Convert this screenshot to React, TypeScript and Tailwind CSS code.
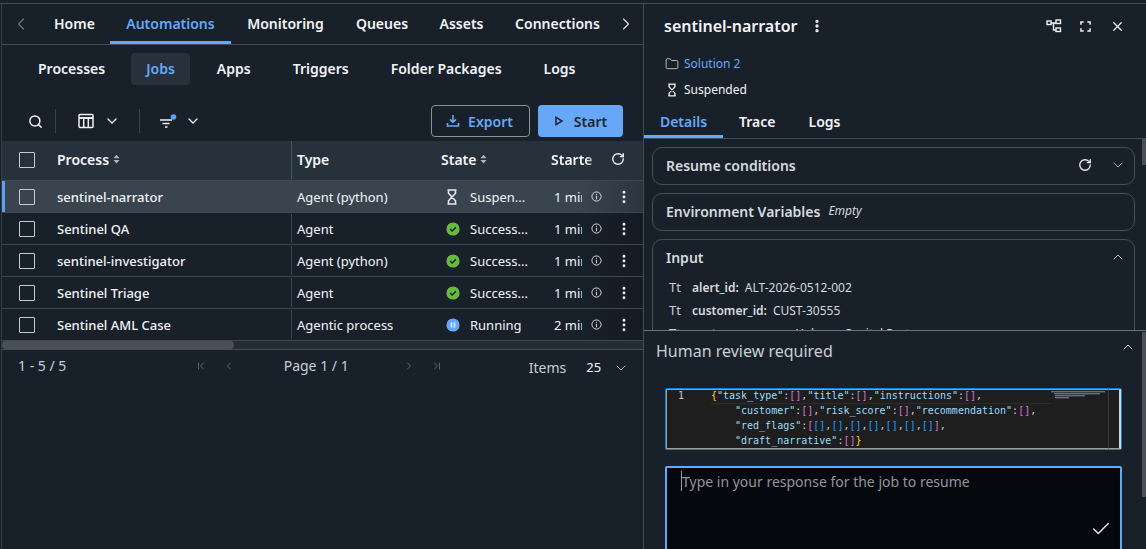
import { ChevronDown, ChevronFirst, ChevronLast, ChevronLeft, ChevronRight, ChevronUp, Check, EllipsisVertical, Folder, Search, X, RotateCw } from 'lucide-react'
import type { ReactNode } from 'react'

const NOTO = "font-['Noto_Sans','Open_Sans',sans-serif]"

const mainTabs = [
  { name: 'Automations', width: 'w-[121px]' },
  { name: 'Monitoring', width: 'w-[109px]' },
  { name: 'Queues', width: 'w-[84px]' },
  { name: 'Assets', width: 'w-[75px]' },
  { name: 'Connections', width: 'w-[117px]' },
]
const subTabs = ['Processes', 'Jobs', 'Apps', 'Triggers', 'Folder Packages', 'Logs']

type JobState = 'suspended' | 'success' | 'running'

const jobs: { name: string; type: string; state: JobState; label: string; started: string }[] = [
  { name: 'sentinel-narrator', type: 'Agent (python)', state: 'suspended', label: 'Suspen...', started: '1 minute ago' },
  { name: 'Sentinel QA', type: 'Agent', state: 'success', label: 'Success...', started: '1 minute ago' },
  { name: 'sentinel-investigator', type: 'Agent (python)', state: 'success', label: 'Success...', started: '1 minute ago' },
  { name: 'Sentinel Triage', type: 'Agent', state: 'success', label: 'Success...', started: '1 minute ago' },
  { name: 'Sentinel AML Case', type: 'Agentic process', state: 'running', label: 'Running', started: '2 minutes ago' },
]

function Hourglass({ className }: { className?: string }) {
  return (
    <svg viewBox="0 0 12 16" className={className} fill="none" stroke="currentColor" strokeWidth="1.6">
      <path d="M1.5 1h9M1.5 15h9M2.5 1v3.2L9.5 11.8V15M9.5 1v3.2L2.5 11.8V15" />
    </svg>
  )
}

function StateIcon({ state }: { state: JobState }) {
  if (state === 'suspended') return <Hourglass className="h-[16px] w-[12px] text-[#e4e8ec]" />
  if (state === 'success') {
    return (
      <svg viewBox="0 0 14 14" className="h-[14px] w-[14px]">
        <circle cx="7" cy="7" r="6.6" fill="#66bb3c" />
        <path d="M4.2 7.2 6.2 9 9.8 5.4" fill="none" stroke="#18202a" strokeWidth="1.6" />
      </svg>
    )
  }
  return (
    <svg viewBox="0 0 14 14" className="h-[14px] w-[14px]">
      <circle cx="7" cy="7" r="6.6" fill="#66a8f7" />
      <path d="M5.5 4.6v4.8M8.5 4.6v4.8" stroke="#e8f1fc" strokeWidth="1.5" />
    </svg>
  )
}

function Info() {
  return (
    <svg viewBox="0 0 12 12" className="h-[11px] w-[11px] text-[#dfe3e7]" fill="none" stroke="currentColor" strokeWidth="1">
      <circle cx="6" cy="6" r="5" />
      <path d="M6 3v1.2M6 5.2V9" />
    </svg>
  )
}

function Box() {
  return <span className="block h-4 w-4 rounded-[1px] border border-[#c5cbd1]" />
}

function SortArrows() {
  return (
    <svg viewBox="0 0 8 10" className="ml-[4px] h-[10px] w-[7px] text-[#aeb5bc]" fill="currentColor">
      <path d="M4 0 7.5 4H.5zM4 10 .5 6h7z" />
    </svg>
  )
}

function TableIcon() {
  return (
    <svg viewBox="0 0 16 16" className="h-4 w-4 text-[#eef1f3]" fill="none" stroke="currentColor" strokeWidth="1.5">
      <rect x="1" y="1.5" width="14" height="13" rx="1" />
      <path d="M1 5h14" strokeWidth="2" />
      <path d="M5.7 5v9M10.3 5v9" />
    </svg>
  )
}

function FilterIcon() {
  return (
    <svg viewBox="0 0 18 15" className="h-[15px] w-[18px] text-[#eef1f3]" fill="none">
      <path d="M1 6h12M3.5 9.5h7M6 13h2.5" stroke="currentColor" strokeWidth="1.5" />
      <circle cx="14.5" cy="3" r="2.8" fill="#5ba2f5" />
    </svg>
  )
}

function Divider() {
  return <span className="block h-6 w-px bg-[#39434e]" />
}

function Cell({ children, className = '' }: { children: ReactNode; className?: string }) {
  return <div className={`flex min-w-0 items-center overflow-hidden whitespace-nowrap ${className}`}>{children}</div>
}

const ROW_GRID = 'grid grid-cols-[55px_234px_150px_110px_31px_61px]'

function JobRow({ job, selected }: { job: (typeof jobs)[number]; selected: boolean }) {
  return (
    <div
      className={`${ROW_GRID} h-8 border-b border-[#3e4853] text-[13px] text-[#f2f4f6] ${selected ? 'bg-[#39444f]' : 'bg-[#18202a]'}`}
    >
      <Cell className={`pl-[17px] ${selected ? 'shadow-[inset_3px_0_0_#5ba2f5]' : ''}`}>
        <Box />
      </Cell>
      <Cell className="pt-[2px] font-medium">{job.name}</Cell>
      <Cell className="my-px border-l border-[#3e4853] pt-[2px] pl-[5px]">{job.type}</Cell>
      <Cell className="pl-[5px]">
        <span className="flex w-[24px] items-center">
          <StateIcon state={job.state} />
        </span>
        <span className="pt-[2px]">{job.label}</span>
      </Cell>
      <Cell className="pt-[2px] pl-[3px]">{job.started}</Cell>
      <Cell
        className={`justify-end gap-[14px] pr-[11px] ${selected ? 'bg-linear-to-r from-[#39444f] to-[#2b3540]' : 'bg-linear-to-r from-[#18202a] to-[#141b24]'}`}
      >
        <Info />
        <EllipsisVertical className="h-4 w-4 text-[#eef1f3]" strokeWidth={2.4} />
      </Cell>
    </div>
  )
}

function Card({ children, className = '' }: { children: ReactNode; className?: string }) {
  return <div className={`rounded-[10px] border border-[#465059] px-[13px] ${className}`}>{children}</div>
}

function Tt() {
  return <span className="w-[26px] pl-[3px] text-[13px] text-[#c9ced3]">Tt</span>
}

function InputRow({ name, value }: { name: string; value: string }) {
  return (
    <div className="flex h-[23px] items-center whitespace-nowrap text-[12px]">
      <Tt />
      <span className="mr-[6px] font-semibold">{name}</span>
      {value}
    </div>
  )
}

const STR = 'text-[#9cdcfe]'
const PUNC = 'text-[#cccccc]'
const GOLD = 'text-[#ffd700]'
const PINK = 'text-[#da70d6]'
const BLUE = 'text-[#179fff]'

function Pair({ k, last }: { k: string; last?: boolean }) {
  return (
    <>
      <span className={STR}>"{k}"</span>
      <span className={PUNC}>:</span>
      <span className={PINK}>[]</span>
      {!last && <span className={PUNC}>,</span>}
    </>
  )
}

function Minimap() {
  const lines = [
    { y: 0, x: 0, w: 54 },
    { y: 2, x: 3, w: 46 },
    { y: 4, x: 4, w: 30 },
    { y: 6, x: 4, w: 14 },
  ]
  return (
    <svg viewBox="0 0 54 8" className="h-2 w-[54px]">
      {lines.map((l) => (
        <rect key={l.y} x={l.x} y={l.y} width={l.w} height="1.4" fill="#5b7280" />
      ))}
    </svg>
  )
}

export default function App() {
  return (
    <div className={`${NOTO} flex h-[549px] w-[1146px] flex-col overflow-hidden bg-[#18202a] pt-[3px] text-[#f2f4f6]`}>
      <div className="flex min-h-0 flex-1 border-t border-[#434d57]">
        {/* jobs list */}
        <div className="ml-px flex w-[642px] shrink-0 flex-col border-l border-[#333d47]">
          <div className="flex h-[41px] shrink-0 items-stretch border-b border-[#434d57] pb-px text-[14px] font-semibold">
            <div className="flex w-[108px] items-center pl-[9px]">
              <ChevronLeft className="h-5 w-5 text-[#6d7781]" strokeWidth={1.4} />
              <span className="ml-[23px]">Home</span>
            </div>
            {mainTabs.map((tab) => (
              <div
                key={tab.name}
                className={`relative flex items-center justify-center ${tab.width} ${tab.name === 'Automations' ? 'text-[#66a8f7]' : ''}`}
              >
                {tab.name}
                {tab.name === 'Automations' && <span className="absolute inset-x-0 -bottom-px h-[3px] bg-[#66a8f7]" />}
              </div>
            ))}
            <div className="flex items-center">
              <ChevronRight className="h-5 w-5 text-[#dfe3e7]" strokeWidth={1.4} />
            </div>
          </div>

          <div className="flex h-[48px] shrink-0 items-center gap-3 pl-[21px] text-[14px] font-semibold">
            {subTabs.map((tab) => (
              <div
                key={tab}
                className={`flex h-8 items-center rounded pb-px pl-[15px] ${tab === 'Processes' ? 'pr-[14px]' : 'pr-[15px]'} ${tab === 'Jobs' ? 'bg-[#27313b] text-[#66a8f7]' : ''}`}
              >
                {tab}
              </div>
            ))}
          </div>

          <div className="flex h-[48px] shrink-0 items-center pt-[8px] pr-[20px] pl-[26px]">
            <Search className="h-[15px] w-[15px] text-[#eef1f3]" strokeWidth={2.4} />
            <span className="ml-[12px]">
              <Divider />
            </span>
            <span className="ml-[22px]">
              <TableIcon />
            </span>
            <ChevronDown className="ml-[10px] h-4 w-4 text-[#eef1f3]" strokeWidth={2} />
            <span className="ml-[19px]">
              <Divider />
            </span>
            <span className="ml-[19px]">
              <FilterIcon />
            </span>
            <ChevronDown className="ml-[8px] h-4 w-4 text-[#eef1f3]" strokeWidth={2} />
            <div className="ml-auto flex gap-2 text-[14px] font-semibold">
              <div className="flex h-8 w-[99px] items-center justify-center gap-[8px] rounded border border-[#8a939c] pr-[2px] text-[#66a8f7]">
                <svg viewBox="0 0 14 14" className="h-[14px] w-[14px]" fill="none" stroke="currentColor" strokeWidth="1.6">
                  <path d="M7 1v7M4 5.4 7 8.4l3-3M1.5 9v3h11V9" />
                </svg>
                Export
              </div>
              <div className="flex h-8 w-[85px] items-center justify-center gap-[10px] rounded bg-[#66a8f7] text-[#1c2733]">
                <svg viewBox="0 0 10 10" className="h-[10px] w-[10px]" fill="none" stroke="currentColor" strokeWidth="1.5">
                  <path d="M2 1.4v7.2L8 5z" />
                </svg>
                Start
              </div>
            </div>
          </div>

          <div className="grid h-[40px] shrink-0 grid-cols-[55px_234px_150px_110px_41px_51px] border-b border-[#3e4853] bg-[#27313b] pb-px text-[14px] font-semibold">
            <Cell className="pl-[17px]">
              <Box />
            </Cell>
            <Cell className="pb-[2px]">
              Process
              <SortArrows />
            </Cell>
            <Cell className="border-l border-[#4a545e] pb-[2px] pl-[5px]">Type</Cell>
            <Cell className="pb-[2px]">
              State
              <SortArrows />
            </Cell>
            <Cell className="pb-[2px]">
              <span className="[mask-image:linear-gradient(to_right,black_70%,transparent)]">Started</span>
            </Cell>
            <Cell className="pb-[2px] pl-[19px]">
              <RotateCw className="h-[14px] w-[14px] text-[#eef1f3]" strokeWidth={2.4} />
            </Cell>
          </div>

          {jobs.map((job, i) => (
            <JobRow key={job.name} job={job} selected={i === 0} />
          ))}

          <div className="h-[8px] shrink-0 bg-[#242c35]">
            <div className="h-full w-[232px] rounded-full bg-[#4a5056]" />
          </div>

          <div className="flex h-[34px] shrink-0 items-center border-t border-[#434d57] pr-[14px] pb-[2px] pl-[16px] text-[14px] text-[#c9ced3]">
            <span className="w-[178px]">1 - 5 / 5</span>
            <ChevronFirst className="h-3 w-3 text-[#5f6973]" />
            <ChevronLeft className="ml-[16px] h-3 w-3 text-[#5f6973]" />
            <span className="ml-[49px] w-[120px]">Page 1 / 1</span>
            <ChevronRight className="h-3 w-3 text-[#5f6973]" />
            <ChevronLast className="ml-[16px] h-3 w-3 text-[#5f6973]" />
            <span className="ml-[86px] pt-[4px]">Items</span>
            <span className="ml-[20px] pt-[4px] text-[13px] text-[#eef1f3]">25</span>
            <ChevronDown className="mt-[4px] ml-[12px] h-4 w-4 text-[#aeb5bc]" strokeWidth={1.5} />
          </div>
        </div>

        {/* job details */}
        <div className="relative flex min-w-0 flex-1 flex-col border-l border-[#434d57]">
          <div className="flex h-[46px] shrink-0 items-center pr-[21px] pb-[2px] pl-[20px]">
            <span className="text-[16px] font-semibold">sentinel-narrator</span>
            <EllipsisVertical className="ml-[11px] h-4 w-4" strokeWidth={3} />
            <svg viewBox="0 0 16 14" className="ml-auto h-[14px] w-[16px] text-[#eef1f3]" fill="none" stroke="currentColor" strokeWidth="1.4">
              <rect x="1" y="2" width="4" height="3.5" />
              <rect x="10" y="1" width="4.5" height="3.5" />
              <rect x="10" y="9" width="4.5" height="3.5" />
              <path d="M5 4h5M7.5 4v7H10" />
            </svg>
            <svg viewBox="0 0 12 12" className="ml-[18px] h-[11px] w-[11px] text-[#eef1f3]" fill="none" stroke="currentColor" strokeWidth="1.6">
              <path d="M1 4V1h3M8 1h3v3M11 8v3H8M4 11H1V8" />
            </svg>
            <X className="ml-[19px] h-[15px] w-[15px] text-[#eef1f3]" strokeWidth={2} />
          </div>

          <div className="flex h-[26px] shrink-0 items-center pt-[2px] pl-[21px] text-[12px] text-[#66a8f7]">
            <Folder className="mr-[5px] h-[14px] w-[14px] text-[#c9ced3]" strokeWidth={1.5} />
            Solution 2
          </div>
          <div className="flex h-[26px] shrink-0 items-center pt-[2px] pl-[23px] text-[12px]">
            <Hourglass className="mr-[7px] h-[14px] w-[10px]" />
            Suspended
          </div>

          <div className="flex h-[37px] shrink-0 items-stretch border-b border-[#434d57] text-[14px] font-semibold">
            <div className="relative flex w-[79px] items-center justify-center pt-[2px] text-[#66a8f7]">
              Details
              <span className="absolute inset-x-0 bottom-0 h-[3px] bg-[#66a8f7]" />
            </div>
            <div className="ml-[16px] flex items-center pt-[2px]">Trace</div>
            <div className="ml-[33px] flex items-center pt-[2px]">Logs</div>
          </div>

          <div className="flex min-h-0 flex-1 flex-col">
            <div className="flex h-[191px] shrink-0 flex-col gap-2 overflow-hidden pt-[8px] pr-[11px] pl-[8px] text-[#d6dade]">
              <Card className="flex h-[38px] shrink-0 items-center pb-[2px] text-[14px] font-semibold">
                Resume conditions
                <RotateCw className="mr-[18px] ml-auto h-[14px] w-[14px] text-[#eef1f3]" strokeWidth={2.2} />
                <ChevronDown className="mr-[-5px] h-4 w-4 text-[#aeb5bc]" strokeWidth={1.4} />
              </Card>
              <Card className="flex h-[38px] shrink-0 items-center pb-[2px] text-[14px] font-semibold">
                Environment Variables
                <em className="ml-[8px] text-[12px] font-normal">Empty</em>
              </Card>
              <Card className="h-[120px] shrink-0 pt-[6px]">
                <div className="flex h-[22px] items-center text-[14px] font-semibold">
                  Input
                  <ChevronUp className="mr-[-5px] ml-auto h-4 w-4 text-[#c9ced3]" strokeWidth={1.4} />
                </div>
                <div className="mt-[8px]">
                  <InputRow name="alert_id:" value="ALT-2026-0512-002" />
                  <InputRow name="customer_id:" value="CUST-30555" />
                  <InputRow name="customer_name:" value="Helvane Capital Partners" />
                </div>
              </Card>
            </div>

            <div className="min-h-0 flex-1 border-t border-[#687480] pr-[24px] pl-[21px]">
              <div className="mx-[-9px] flex h-[40px] items-center text-[16px] text-[#c9ced3]">
                Human review required
                <ChevronUp className="mt-[-9px] mr-[-5px] ml-auto h-4 w-4 text-[#d6dade]" strokeWidth={1.5} />
              </div>

              <div className="mt-[17px] flex h-[62px] rounded-[2px] border border-[#0e80cf] bg-[#1e1e1e] font-['DejaVu_Sans_Mono',monospace] text-[10px] leading-[15px]">
                <div className="flex flex-1 overflow-hidden border-y border-l border-[#9aa0a6]">
                  <span className="-mt-[2px] w-[44px] shrink-0 pr-[27px] text-right text-[#c6c6c6]">1</span>
                  <div className="-mt-[2px] flex-1 whitespace-pre">
                    <div className="border-b border-[#2c2c2c]">
                      <span className={GOLD}>{'{'}</span>
                      <Pair k="task_type" />
                      <Pair k="title" />
                      <Pair k="instructions" />
                    </div>
                    <div className="-mt-px pl-[24px]">
                      <Pair k="customer" />
                      <Pair k="risk_score" />
                      <Pair k="recommendation" />
                    </div>
                    <div className="pl-[24px]">
                      <span className={STR}>"red_flags"</span>
                      <span className={PUNC}>:</span>
                      <span className={PINK}>[</span>
                      {[0, 1, 2, 3, 4, 5, 6].map((n) => (
                        <span key={n}>
                          <span className={BLUE}>[]</span>
                          {n < 6 && <span className={PUNC}>,</span>}
                        </span>
                      ))}
                      <span className={PINK}>]</span>
                      <span className={PUNC}>,</span>
                    </div>
                    <div className="pl-[24px]">
                      <Pair k="draft_narrative" last />
                      <span className={GOLD}>{'}'}</span>
                    </div>
                  </div>
                  <div className="w-[57px] shrink-0 pt-[1px]">
                    <Minimap />
                  </div>
                </div>
                <div className="w-[13px] shrink-0 border-y border-r-2 border-l border-y-[#9aa0a6] border-r-[#d0d4d8] border-l-[#3a3a3a]" />
              </div>

              <div className="mt-[16px] flex h-[100px] justify-between rounded-t-[2px] border-2 border-[#66a8f7] bg-[#05090d] pt-[3px] pl-[14px] text-[14px] text-[#8f969d]">
                <span className="h-[20px] border-l border-[#9aa0a6]">Type in your response for the job to resume</span>
                <Check className="mt-[47px] mr-[8px] h-[22px] w-[22px] text-[#e4e8ec]" strokeWidth={1.6} />
              </div>
            </div>
          </div>

          {/* overlay scrollbars */}
          <span className="absolute top-[135px] right-0 h-[26px] w-[4px] bg-[#4a5056]" />
          <span className="absolute top-[328px] right-0 h-[165px] w-[4px] bg-[#4a5056]" />
        </div>
      </div>
    </div>
  )
}
